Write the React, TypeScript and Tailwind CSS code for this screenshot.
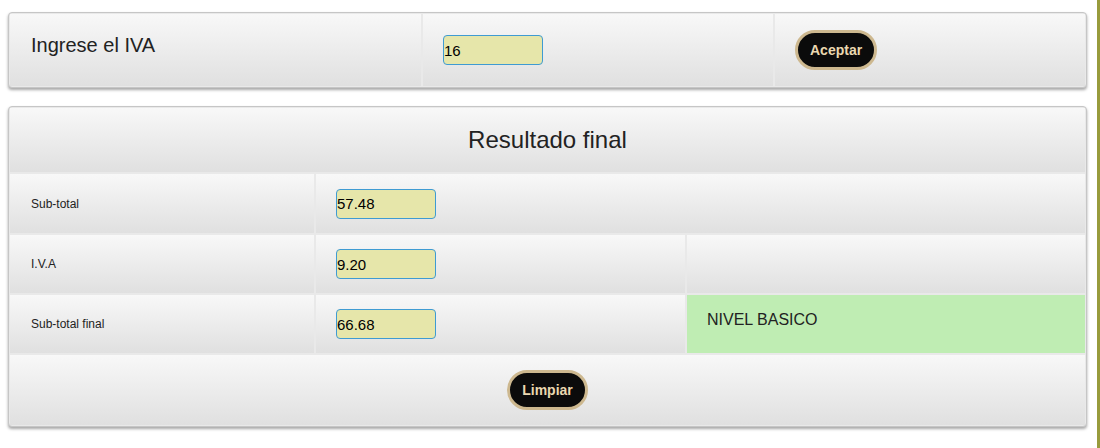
import type { ReactNode } from 'react';

const font = { fontFamily: '"Liberation Sans", Arial, sans-serif' };

const cell = 'flex items-center bg-linear-to-b from-[#f8f8f8] to-[#e0e0e0]';

function Field({ value }: { value: string }) {
  return (
    <input
      readOnly
      value={value}
      className="h-[30px] w-[100px] rounded-[4px] border border-[#3f9bd2] bg-[#e6e6aa] px-0 text-[15px] text-black outline-none"
    />
  );
}

function PillButton({ children }: { children: ReactNode }) {
  return (
    <button className="h-[40px] rounded-full border-[3px] border-[#cdb88f] bg-[#0b0b0b] px-[12px] text-[14px] font-bold text-[#ead8b0]">
      {children}
    </button>
  );
}

function Panel({ children, className }: { children: ReactNode; className: string }) {
  return (
    <div
      className={`grid w-[1079px] gap-[2px] rounded-[4px] border border-[#c6c6c6] bg-[#e9e9e9] p-px shadow-[0_2px_3px_rgba(0,0,0,0.35)] ${className}`}
    >
      {children}
    </div>
  );
}

export default function App() {
  return (
    <div className="flex h-[448px] bg-white text-[#222]" style={font}>
      <main className="flex-1 pl-2 pt-3">
        {/* IVA */}
        <Panel className="grid-cols-[411px_350px_1fr] grid-rows-[72px]">
          <div className={`${cell} pb-[10px] pl-[21px] text-[20px]`}>Ingrese el IVA</div>
          <div className={`${cell} pl-[20px]`}>
            <Field value="16" />
          </div>
          <div className={`${cell} pl-[20px]`}>
            <PillButton>Aceptar</PillButton>
          </div>
        </Panel>

        {/* Resultado */}
        <Panel className="mt-[18px] grid-cols-[304px_369px_1fr] grid-rows-[64px_59px_58px_58px_70px]">
          <div className={`${cell} col-span-3 justify-center text-[24px]`}>Resultado final</div>

          <div className={`${cell} pl-[21px] text-[12px]`}>Sub-total</div>
          <div className={`${cell} col-span-2 pl-[20px]`}>
            <Field value="57.48" />
          </div>

          <div className={`${cell} pl-[21px] text-[12px]`}>I.V.A</div>
          <div className={`${cell} pl-[20px]`}>
            <Field value="9.20" />
          </div>
          <div className={cell} />

          <div className={`${cell} pl-[21px] text-[12px]`}>Sub-total final</div>
          <div className={`${cell} pl-[20px]`}>
            <Field value="66.68" />
          </div>
          <div className="flex items-center bg-[#bfedb3] pb-[8px] pl-[20px] text-[16px]">NIVEL BASICO</div>

          <div className={`${cell} col-span-3 justify-center`}>
            <PillButton>Limpiar</PillButton>
          </div>
        </Panel>
      </main>
      <div className="w-[3px] bg-[#989b3c]" />
    </div>
  );
}
